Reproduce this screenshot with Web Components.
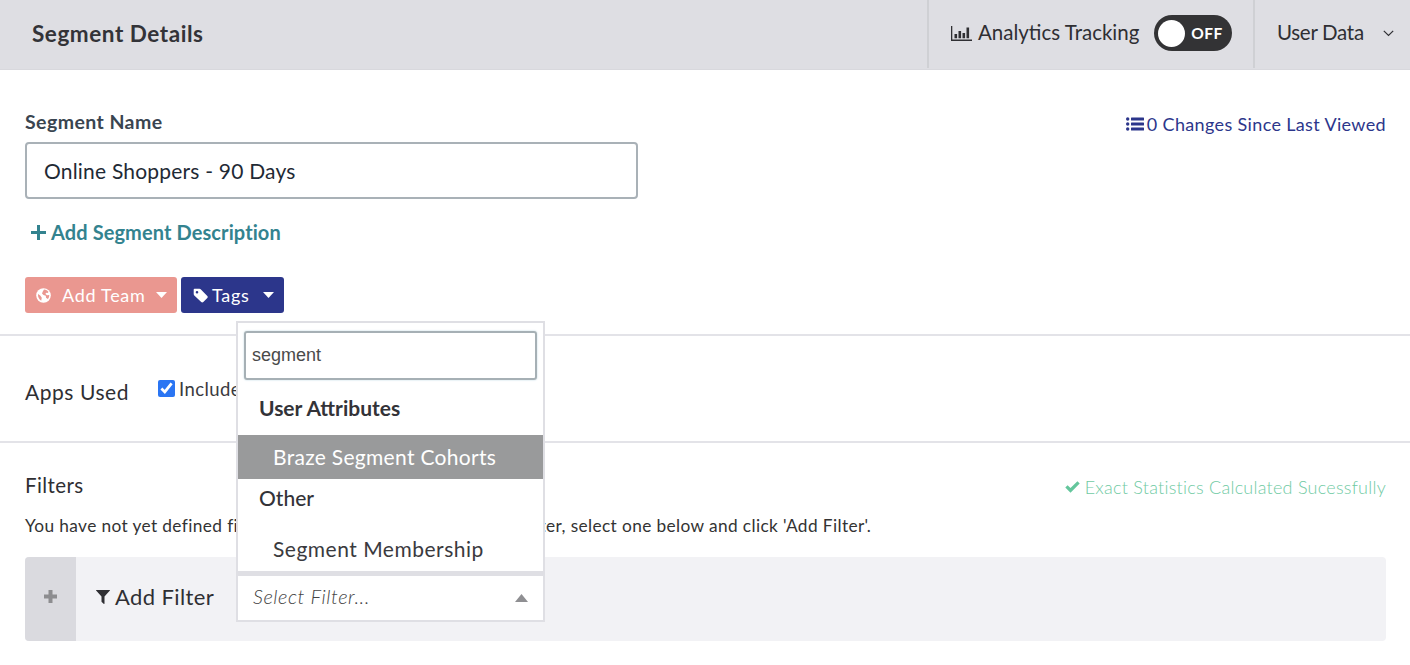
<!DOCTYPE html>
<html lang="en">
<head>
<meta charset="utf-8">
<title>Segment Details</title>
<style>
    html, body {
        margin: 0;
        background: #fff;
        font-family: Lato, "Liberation Sans", sans-serif;
        color: #2f2f33;
        overflow: hidden;
    }
</style>
</head>
<body>
<segment-page></segment-page>
<script>
const ICONS = {
    chart: `<svg width="22" height="15" viewBox="0 0 22 15"><path fill="currentColor" d="M0 0h1.3v13.4H21V15H0zM3.5 8h2.6v4.2H3.500zM7.500 5h2.600v7.200H7.500zM11.500 7h2.600v5.200h-2.600zM15.500 1.500h2.600v10.700h-2.600z"/></svg>`,
    list: `<svg width="18" height="14" viewBox="0 0 18 14"><g fill="currentColor"><circle cx="1.700" cy="2" r="1.700"/><circle cx="1.700" cy="7" r="1.700"/><circle cx="1.700" cy="12" r="1.700"/><rect x="5" y="0.600" width="13" height="2.800" rx=".5"/><rect x="5" y="5.600" width="13" height="2.800" rx=".5"/><rect x="5" y="10.600" width="13" height="2.800" rx=".5"/></g></svg>`,
    globe: `<svg width="15" height="15" viewBox="0 0 15 15"><circle cx="7.500" cy="7.500" r="7.300" fill="currentColor"/><path fill="#ea9790" d="M8 1.500c2 .2 3.500 1 4.500 2.500l-1 1-1.500-.3-.5 1.300 1.500 1.200 2.300-.2c0 1.500-.5 3-1.500 4l-1.800-1.200-.2-2L7.500 7 6 5.500l.8-2zM2 6l2.200 1.500 1.600 2.200-.6 3C3 11.500 1.800 9 2 6z"/></svg>`,
    tag: `<svg width="15" height="15" viewBox="0 0 15 15"><path fill="currentColor" d="M1.500 0.800h5c.5 0 .9.200 1.200.500l6.600 6.600c.6.600.6 1.500 0 2.100l-4 4c-.6.600-1.500.6-2.100 0L1.300 7.400C.9 7 .700 6.600.700 6.100V1.600c0-.5.300-.8.800-.8zM4 3a1.300 1.300 0 1 0 0 2.600A1.300 1.300 0 0 0 4 3z"/></svg>`,
    check: `<svg width="15" height="12" viewBox="0 0 15 12"><path fill="currentColor" d="M5.500 11.700.3 6.500l2.300-2.300 2.900 2.900L12.400.3l2.300 2.300z"/></svg>`,
    filter: `<svg width="14" height="14" viewBox="0 0 14 14"><path fill="currentColor" d="M.3 0h13.400c.3 0 .4.300.2.600L8.500 6.400V13.600c0 .3-.3.500-.6.300L5.700 12c-.1-.1-.2-.2-.2-.4V6.400L.1.600C-.1.300 0 0 .3 0z"/></svg>`,
    plus: `<svg width="13" height="13" viewBox="0 0 13 13"><path fill="currentColor" d="M4.500 0h4v4.500H13v4H8.500V13h-4V8.500H0v-4h4.500z"/></svg>`,
    thinPlus: `<svg width="15" height="15" viewBox="0 0 15 15"><path fill="currentColor" d="M6 0h3v6h6v3H9v6H6V9H0V6h6z"/></svg>`,
    chevron: `<svg width="11" height="7" viewBox="0 0 11 7"><path fill="none" stroke="currentColor" stroke-width="1.200" d="M.8.800 5.500 5.500 10.200.8"/></svg>`,
    caret: `<svg width="11" height="6" viewBox="0 0 11 6"><path fill="currentColor" d="M0 0h11L5.500 6z"/></svg>`,
    caretUp: `<svg width="13" height="8" viewBox="0 0 13 8"><path fill="currentColor" d="M6.500 0 13 8H0z"/></svg>`
};

class SegmentHeader extends HTMLElement {
    constructor() {
        super();
        this.attachShadow({ mode: 'open' }).innerHTML = `
            <style>
                :host { display: flex; height: 69px; background: #dedee3; border-bottom: 1px solid #d8d8dd; color: #2f2f33; }
                h1 { flex: 1; margin: 0; padding-left: 32px; font-size: 22.500px; line-height: 67px; font-weight: 700; color: #333338; letter-spacing: .55px; }
                .cell { display: flex; align-items: center; height: 68px; padding-bottom: 2px; box-sizing: border-box; border-left: 2px solid #cfd0d4; font-size: 20.500px; }
                .cell span { padding-bottom: 2px; }
                .tracking { width: 326px; padding-left: 22px; }
                .tracking svg { margin-right: 5px; }
                .tracking span { letter-spacing: 0; margin-right: 15px; }
                .user { width: 157px; padding-left: 22px; }
                .user span { letter-spacing: -.3px; margin-right: 19px; }
            </style>
            <h1>Segment Details</h1>
            <div class="cell tracking">${ICONS.chart}<span>Analytics Tracking</span><seg-toggle></seg-toggle></div>
            <div class="cell user"><span>User Data</span>${ICONS.chevron}</div>
        `;
    }
}

class SegToggle extends HTMLElement {
    constructor() {
        super();
        this.attachShadow({ mode: 'open' }).innerHTML = `
            <style>
                :host { display: flex; align-items: center; width: 78px; height: 36px; box-sizing: border-box; padding-left: 4px; border-radius: 18px; background: #333335; color: #fff; }
                i { width: 27px; height: 27px; border-radius: 50%; background: #fff; }
                span { margin-left: 6px; font-size: 15.500px; font-weight: 700; letter-spacing: .4px; }
            </style>
            <i></i><span>OFF</span>
        `;
    }
}

class SegButton extends HTMLElement {
    static get observedAttributes() { return ['icon']; }
    constructor() {
        super();
        this.attachShadow({ mode: 'open' }).innerHTML = `
            <style>
                :host { display: inline-flex; align-items: center; height: 36px; box-sizing: border-box; border-radius: 3px; color: #fff; font-size: 18px; letter-spacing: .7px; background: var(--btn, #2c368b); }
                .icon { display: flex; }
                .caret { display: flex; }
            </style>
            <span class="icon"></span><slot></slot><span class="caret">${ICONS.caret}</span>
        `;
    }
    attributeChangedCallback(name, old, value) {
        this.shadowRoot.querySelector('.icon').innerHTML = ICONS[value];
    }
}

class SegmentName extends HTMLElement {
    constructor() {
        super();
        this.attachShadow({ mode: 'open' }).innerHTML = `
            <style>
                :host { display: block; position: relative; height: 266px; box-sizing: border-box; padding: 41px 25px 0; border-bottom: 2px solid #e3e3e8; }
                label { display: block; height: 31px; font-size: 19.500px; line-height: 22px; font-weight: 700; color: #3a4550; letter-spacing: .43px; }
                .input { width: 613px; height: 57px; box-sizing: border-box; border: 2px solid #a9b1b7; border-radius: 4px; padding-left: 17px; font-size: 21px; line-height: 53px; color: #1f2a35; letter-spacing: .2px; }
                .add { display: flex; align-items: center; gap: 5px; height: 24px; margin: 21px 0 0 6px; color: #33838f; font-size: 20px; font-weight: 700; letter-spacing: .1px; }
                .buttons { display: flex; gap: 4px; margin-top: 33px; }
                .changes { position: absolute; right: 24px; top: 43px; display: flex; align-items: center; gap: 3px; color: #2c368b; font-size: 18px; letter-spacing: .35px; }
                .team { --btn: #ea9790; width: 152px; padding-left: 11px; }
                .team span { margin-left: 11px; margin-right: 10px; }
                .tags { --btn: #2c368b; width: 103px; padding-left: 12px; }
                .tags span { margin-left: 4px; margin-right: 14px; }
            </style>
            <label>Segment Name</label>
            <div class="input">Online Shoppers - 90 Days</div>
            <div class="add">${ICONS.thinPlus}<span>Add Segment Description</span></div>
            <div class="buttons">
                <seg-button class="team" icon="globe"><span>Add Team</span></seg-button>
                <seg-button class="tags" icon="tag"><span>Tags</span></seg-button>
            </div>
            <div class="changes">${ICONS.list}<span>0 Changes Since Last Viewed</span></div>
        `;
    }
}

class AppsUsed extends HTMLElement {
    constructor() {
        super();
        this.attachShadow({ mode: 'open' }).innerHTML = `
            <style>
                :host { display: flex; align-items: center; height: 107px; box-sizing: border-box; padding-left: 25px; border-bottom: 2px solid #e3e3e8; }
                .title { width: 133px; font-size: 21px; color: #2f2f33; letter-spacing: .55px; padding-top: 6px; }
                input { width: 17px; height: 17px; margin: 0 4px 0 0; accent-color: #2a75f3; }
                .include { font-size: 18.500px; color: #3a3a3e; letter-spacing: .4px; }
                .row { display: flex; align-items: center; }
            </style>
            <div class="title">Apps Used</div>
            <div class="row"><input type="checkbox" checked><span class="include">Include</span></div>
        `;
    }
}

class FilterBar extends HTMLElement {
    constructor() {
        super();
        this.attachShadow({ mode: 'open' }).innerHTML = `
            <style>
                :host { display: flex; height: 84px; border-radius: 4px; background: #f2f2f5; overflow: visible; }
                .plus { display: flex; align-items: center; justify-content: center; width: 51px; height: 100%; padding-bottom: 5px; box-sizing: border-box; border-radius: 4px 0 0 4px; background: #dadadf; color: #8d8d90; }
                .label { display: flex; align-items: center; gap: 5px; width: 160px; height: 79px; box-sizing: border-box; padding: 0 0 0 20px; font-size: 22px; color: #2f2f33; letter-spacing: .4px; }
                .select { display: flex; align-items: center; justify-content: space-between; width: 309px; height: 48px; margin-top: 17px; box-sizing: border-box; border: 2px solid #dfdfe4; background: #fff; padding: 0 15px 0 15px; color: #444; font-size: 20px; font-style: italic; font-weight: 300; letter-spacing: .55px; }
                .select span { padding-bottom: 4px; }
                .select svg { color: #8f8f92; }
            </style>
            <div class="plus">${ICONS.plus}</div>
            <div class="label">${ICONS.filter}<span>Add Filter</span></div>
            <div class="select"><span>Select Filter...</span>${ICONS.caretUp}</div>
        `;
    }
}

class FiltersSection extends HTMLElement {
    constructor() {
        super();
        this.attachShadow({ mode: 'open' }).innerHTML = `
            <style>
                :host { display: block; padding: 29px 24px 0 25px; }
                .top { display: flex; justify-content: space-between; height: 41px; }
                h2 { margin: 0; font-size: 20.500px; line-height: 26px; font-weight: 400; color: #2f2f33; letter-spacing: .4px; }
                .status { display: flex; align-items: center; gap: 5px; height: 26px; padding-top: 2px; color: #6fcaa3; font-size: 18px; font-weight: 300; letter-spacing: .25px; }
                .status svg { color: #64c69c; }
                p { margin: 0 0 19px; font-size: 17.300px; line-height: 25px; color: #333; letter-spacing: .38px; height: 25px; white-space: nowrap; }
            </style>
            <div class="top">
                <h2>Filters</h2>
                <div class="status">${ICONS.check}<span>Exact Statistics Calculated Sucessfully</span></div>
            </div>
            <p>You have not yet defined filters for this segment. To add a new filter, select one below and click 'Add Filter'.</p>
            <filter-bar></filter-bar>
        `;
    }
}

class FilterMenu extends HTMLElement {
    constructor() {
        super();
        this.attachShadow({ mode: 'open' }).innerHTML = `
            <style>
                :host { position: absolute; left: 236px; top: 321px; width: 309px; height: 253px; box-sizing: border-box; display: block; background: #fff; border: 2px solid #dfdfe4; border-bottom-width: 3px; }
                .search { position: absolute; left: 6px; top: 8px; width: 293px; height: 49px; box-sizing: border-box; border: 2px solid #a6b0b5; border-radius: 3px; box-shadow: 0 0 2px #b8d4e0; padding-left: 6px; font: 18px/44px "Liberation Sans", sans-serif; color: #4a4a4a; }
                .group { position: absolute; left: 21px; font-size: 21px; color: #333338; letter-spacing: 0; }
                .item { position: absolute; left: 0; right: 0; padding-left: 35px; font-size: 21px; letter-spacing: .3px; color: #3a3a3e; box-sizing: border-box; }
                .attr { top: 72px; font-weight: 700; }
                .other { top: 162px; font-weight: 500; }
                .on { top: 112px; height: 44px; line-height: 43px; background: #999a9b; color: #fff; }
                .seg { top: 204px; height: 44px; line-height: 44px; letter-spacing: .5px; }
            </style>
            <div class="search">segment</div>
            <div class="group attr">User Attributes</div>
            <div class="item on">Braze Segment Cohorts</div>
            <div class="group other">Other</div>
            <div class="item seg">Segment Membership</div>
        `;
    }
}

class SegmentPage extends HTMLElement {
    constructor() {
        super();
        this.attachShadow({ mode: 'open' }).innerHTML = `
            <style>
                :host { display: block; position: relative; width: 1410px; height: 665px; overflow: hidden; background: #fff; }
            </style>
            <segment-header></segment-header>
            <segment-name></segment-name>
            <apps-used></apps-used>
            <filters-section></filters-section>
            <filter-menu></filter-menu>
        `;
    }
}

customElements.define('seg-toggle', SegToggle);
customElements.define('seg-button', SegButton);
customElements.define('segment-header', SegmentHeader);
customElements.define('segment-name', SegmentName);
customElements.define('apps-used', AppsUsed);
customElements.define('filter-bar', FilterBar);
customElements.define('filters-section', FiltersSection);
customElements.define('filter-menu', FilterMenu);
customElements.define('segment-page', SegmentPage);
</script>
</body>
</html>
